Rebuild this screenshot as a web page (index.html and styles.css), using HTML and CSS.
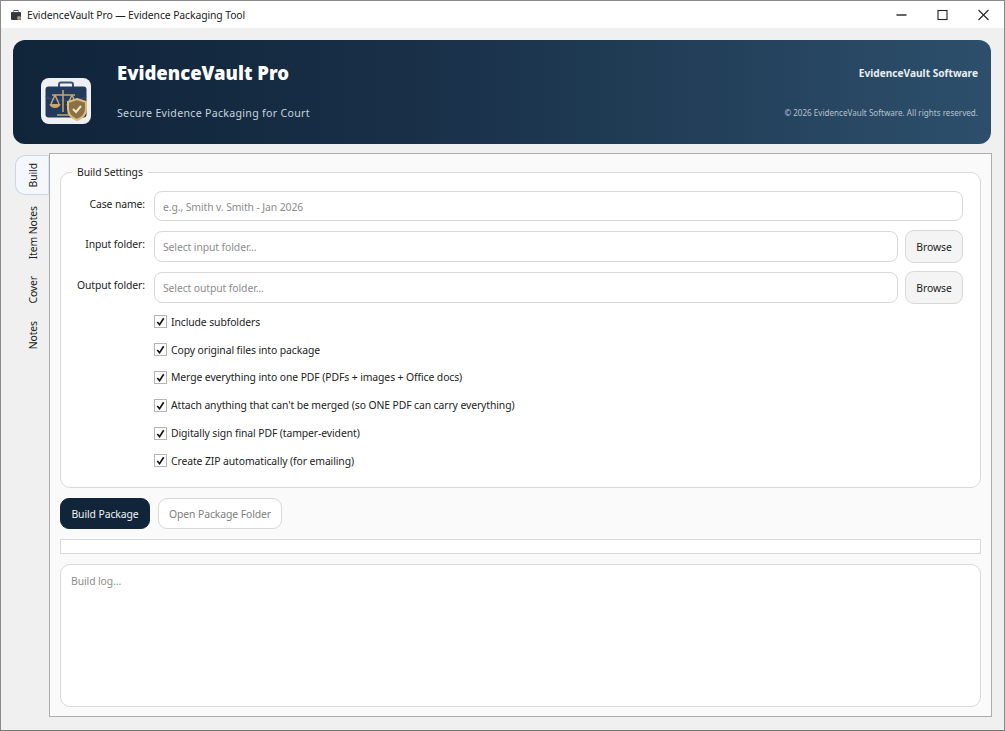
FILE: index.html
```html
<!DOCTYPE html>
<html lang="en">
<head>
<meta charset="utf-8">
<title>EvidenceVault Pro — Evidence Packaging Tool</title>
<link rel="stylesheet" href="styles.css">
</head>
<body>
<div class="window">
  <div class="titlebar">
    <svg class="app-icon" viewBox="0 0 12 12"><rect x="1" y="3" width="10" height="8" rx="1" fill="#33383f"/><rect x="4" y="1.500" width="4" height="2" fill="none" stroke="#555" stroke-width="1"/><circle cx="9" cy="9" r="2" fill="#a89a80"/></svg>
    <span class="title-text">EvidenceVault Pro — Evidence Packaging Tool</span>
    <div class="win-controls">
      <svg class="win-btn" viewBox="0 0 41 28"><path d="M15.500 14h10" stroke="#222" stroke-width="1.400"/></svg>
      <svg class="win-btn" viewBox="0 0 41 28"><rect x="16" y="9.500" width="9" height="9" fill="none" stroke="#222" stroke-width="1.100"/></svg>
      <svg class="win-btn" viewBox="0 0 41 28"><path d="M15.500 9l10 10M25.500 9l-10 10" stroke="#222" stroke-width="1.100"/></svg>
    </div>
  </div>
  <div class="client">
    <header class="banner">
      <div class="logo">
        <svg viewBox="0 0 50 46" width="50" height="46">
          <rect width="50" height="46" rx="8" fill="#eef0f3"/>
          <path d="M18 9V6.500a2 2 0 0 1 2-2h10a2 2 0 0 1 2 2V9" fill="none" stroke="#3c5273" stroke-width="2"/>
          <rect x="4.500" y="8.500" width="41" height="31" rx="3" fill="#223a5c"/>
          <path d="M4.500 19c12 5 29 5 41 0" fill="none" stroke="#33507a" stroke-width="1"/>
          <g fill="none" stroke="#c9a66b" stroke-width="1.500">
            <path d="M22 12v22M11 17h23M16 37h13"/>
            <path d="M14 17l-4 9M14 17l4 9M31 17l-4 9M31 17l4 9"/>
          </g>
          <path d="M8.500 26h11a5.500 4 0 0 1-11 0z" fill="#c9a66b"/>
          <path d="M25.500 26h11a5.500 4 0 0 1-11 0z" fill="#c9a66b"/>
          <path d="M36 21l9 3v7c0 6-4 9-9 11-5-2-9-5-9-11v-7z" fill="#8a7248" stroke="#e0bc78" stroke-width="2"/>
          <path d="M32 31l3 3 5-6" fill="none" stroke="#f4e4be" stroke-width="2"/>
        </svg>
      </div>
      <div class="banner-left">
        <div class="brand">EvidenceVault Pro</div>
        <div class="tagline">Secure Evidence Packaging for Court</div>
      </div>
      <div class="banner-right">
        <div class="company">EvidenceVault Software</div>
        <div class="copyright">© 2026 EvidenceVault Software. All rights reserved.</div>
      </div>
    </header>
    <div class="main">
      <nav class="tabs">
        <div class="tab tab-active"><span>Build</span></div>
        <div class="tab tab-item"><span>Item Notes</span></div>
        <div class="tab tab-cover"><span>Cover</span></div>
        <div class="tab tab-notes"><span>Notes</span></div>
      </nav>
      <section class="panel">
        <fieldset class="group">
          <legend>Build Settings</legend>
          <div class="row row-first">
            <label class="field-label">Case name:</label>
            <div class="input">e.g., Smith v. Smith - Jan 2026</div>
          </div>
          <div class="row">
            <label class="field-label">Input folder:</label>
            <div class="input">Select input folder...</div>
            <button class="browse">Browse</button>
          </div>
          <div class="row">
            <label class="field-label">Output folder:</label>
            <div class="input">Select output folder...</div>
            <button class="browse">Browse</button>
          </div>
          <ul class="checks">
            <li><span class="check"><svg viewBox="0 0 12 12"><path d="M2.500 6.500l2.500 3 4.500-7" fill="none" stroke="#111" stroke-width="1.800"/></svg></span>Include subfolders</li>
            <li><span class="check"><svg viewBox="0 0 12 12"><path d="M2.500 6.500l2.500 3 4.500-7" fill="none" stroke="#111" stroke-width="1.800"/></svg></span>Copy original files into package</li>
            <li><span class="check"><svg viewBox="0 0 12 12"><path d="M2.500 6.500l2.500 3 4.500-7" fill="none" stroke="#111" stroke-width="1.800"/></svg></span>Merge everything into one PDF (PDFs + images + Office docs)</li>
            <li><span class="check"><svg viewBox="0 0 12 12"><path d="M2.500 6.500l2.500 3 4.500-7" fill="none" stroke="#111" stroke-width="1.800"/></svg></span>Attach anything that can't be merged (so ONE PDF can carry everything)</li>
            <li><span class="check"><svg viewBox="0 0 12 12"><path d="M2.500 6.500l2.500 3 4.500-7" fill="none" stroke="#111" stroke-width="1.800"/></svg></span>Digitally sign final PDF (tamper-evident)</li>
            <li><span class="check"><svg viewBox="0 0 12 12"><path d="M2.500 6.500l2.500 3 4.500-7" fill="none" stroke="#111" stroke-width="1.800"/></svg></span>Create ZIP automatically (for emailing)</li>
          </ul>
        </fieldset>
        <div class="actions">
          <button class="btn-primary">Build Package</button>
          <button class="btn-secondary">Open Package Folder</button>
        </div>
        <div class="progress"></div>
        <div class="log">Build log...</div>
      </section>
    </div>
  </div>
</div>
</body>
</html>
```
FILE: styles.css
```css
* { box-sizing: border-box; }
html, body { margin: 0; padding: 0; }
body {
  width: 1005px;
  height: 731px;
  overflow: hidden;
  font-family: "Noto Sans", "Open Sans", sans-serif;
  font-size: 10.400px;
  letter-spacing: -.1px;
  color: #222;
}
.window {
  width: 1005px;
  height: 731px;
  display: flex;
  flex-direction: column;
  border: 1px solid #8a8a8a;
  border-bottom-color: #777;
  background: #f0f0f0;
}
.titlebar {
  height: 27px;
  flex: none;
  display: flex;
  align-items: center;
  background: #fff;
  padding-left: 9px;
}
.app-icon { width: 12px; height: 12px; margin-right: 5px; flex: none; }
.title-text { color: #222; }
.win-controls { margin-left: auto; display: flex; }
.win-btn { width: 41px; height: 28px; display: block; }
.client {
  flex: 1;
  display: flex;
  flex-direction: column;
  padding: 12px 12px 13px 12px;
  min-height: 0;
}
.banner {
  height: 104px;
  flex: none;
  display: flex;
  margin-right: 1px;
  border-radius: 12px;
  background: linear-gradient(90deg, #10243a 0%, #182f47 40%, #2d4f6b 100%);
  padding: 0 13px 0 28px;
}
.logo { margin-top: 38px; width: 50px; height: 46px; flex: none; }
.logo svg { display: block; }
.banner-left { margin-left: 26px; display: flex; flex-direction: column; }
.brand {
  margin-top: 19px;
  font-size: 18.500px;
  font-weight: 900;
  letter-spacing: 0;
  line-height: 28px;
  color: #fff;
}
.tagline {
  margin-top: 17px;
  font-size: 10.600px;
  line-height: 18px;
  letter-spacing: .3px;
  color: #c9d4de;
}
.banner-right {
  margin-left: auto;
  display: flex;
  flex-direction: column;
  align-items: flex-end;
}
.company {
  margin-top: 24px;
  font-size: 10.150px;
  font-weight: 700;
  letter-spacing: 0;
  line-height: 18px;
  color: #e8eef3;
}
.copyright {
  margin-top: 23px;
  font-size: 8.100px;
  letter-spacing: 0;
  line-height: 16px;
  color: #b4c2ce;
}
.main {
  flex: 1;
  display: flex;
  margin-top: 9px;
  min-height: 0;
}
.tabs {
  width: 36px;
  flex: none;
  display: flex;
  flex-direction: column;
  padding: 2px 0 0 2px;
}
.tab {
  width: 34px;
  display: flex;
  align-items: center;
  justify-content: center;
  padding-left: 2px;
  color: #222;
}
.tab span {
  writing-mode: vertical-rl;
  transform: rotate(180deg);
  white-space: nowrap;
}
.tab-active {
  height: 40px;
  border: 1px solid #c8d6e8;
  border-right-color: #dbe4f0;
  border-radius: 10px 0 0 10px;
  background: #f4f7fc;
}
.tab-item { margin-top: 5px; height: 66px; }
.tab-cover { margin-top: 1px; height: 46px; }
.tab-notes { height: 44px; }
.panel {
  flex: 1;
  border: 1px solid #adadad;
  background: #fafafa;
  padding: 0 10px 9px;
  display: flex;
  flex-direction: column;
  min-width: 0;
}
.group {
  margin: 10px 0 0;
  padding: 11px 17px 0 0;
  height: 324px;
  flex: none;
  border: 1px solid #d9d9d9;
  border-radius: 10px;
  background: #fff;
  display: flex;
  flex-direction: column;
}
.group legend {
  margin-left: 11px;
  padding: 0 5px;
  color: #222;
  line-height: 16px;
}
.row {
  display: flex;
  align-items: flex-start;
  gap: 7px;
  margin-bottom: 10px;
  height: 31px;
}
.row-first { height: 30px; }
.field-label {
  width: 84px;
  flex: none;
  margin-right: 2px;
  text-align: right;
  line-height: 26px;
  color: #222;
}
.input {
  flex: 1;
  height: 100%;
  border: 1px solid #d8d8d8;
  border-radius: 8px;
  background: #fff;
  padding: 0 8px;
  line-height: 30px;
  color: #8c8c8c;
}
.browse {
  width: 58px;
  height: 33px;
  flex: none;
  margin: -1px 0 0;
  border: 1px solid #d8d8d8;
  border-radius: 9px;
  background: #f4f4f4;
  font: inherit;
  letter-spacing: inherit;
  color: #222;
  padding: 0;
}
.checks {
  list-style: none;
  margin: -5px 0 0;
  padding: 0 0 0 93px;
  display: flex;
  flex-direction: column;
}
.checks li {
  display: flex;
  align-items: center;
  height: 27.800px;
  color: #222;
}
.check {
  width: 13px;
  height: 13px;
  flex: none;
  margin-right: 4px;
  border: 1px solid #b5b5b5;
  background: #fff;
  display: block;
}
.check svg { display: block; width: 11px; height: 11px; }
.actions {
  display: flex;
  gap: 8px;
  margin-top: 10px;
  flex: none;
}
.btn-primary, .btn-secondary {
  height: 31px;
  border-radius: 9px;
  font: inherit;
  letter-spacing: inherit;
  padding: 0;
}
.btn-primary {
  width: 90px;
  border: 1px solid #10243a;
  background: #10243a;
  color: #f2f4f6;
}
.btn-secondary {
  width: 124px;
  border: 1px solid #d8d8d8;
  background: #fff;
  color: #7d7d7d;
}
.progress {
  height: 15px;
  flex: none;
  margin-top: 10px;
  border: 1px solid #d9d9d9;
  background: #fff;
}
.log {
  flex: 1;
  margin-top: 10px;
  border: 1px solid #d9d9d9;
  border-radius: 10px;
  background: #fff;
  padding: 8px 10px;
  line-height: 17px;
  color: #8c8c8c;
}
```
